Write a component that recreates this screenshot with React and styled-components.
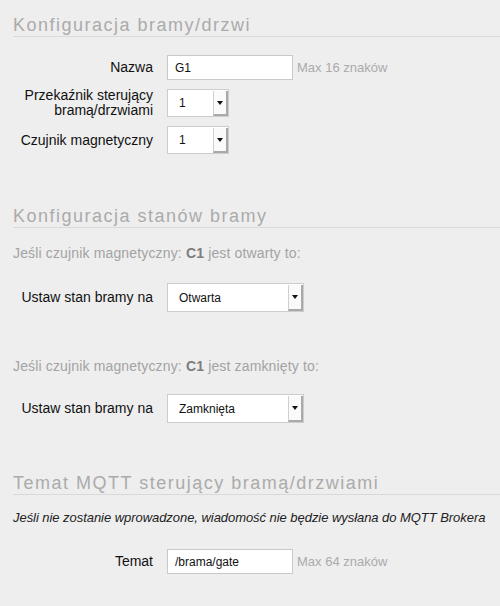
import React from 'react'
import styled, { createGlobalStyle } from 'styled-components'

const GlobalStyle = createGlobalStyle`
  html, body {
    margin: 0;
    padding: 0;
    background: #eeeeee;
  }
  body {
    font-family: "Liberation Sans", Arial, Helvetica, sans-serif;
    color: #111;
  }
`

const Page = styled.div`
  padding-left: 13px;
  padding-bottom: 20px;
  min-height: 606px;
  box-sizing: border-box;
  overflow: hidden;
`

const Heading = styled.h2`
  margin: ${p => p.$top}px 0 0;
  font-size: 18px;
  line-height: 22px;
  font-weight: normal;
  letter-spacing: 1.5px;
  color: #ababab;
  border-bottom: 1px solid #d9d9d9;
  white-space: nowrap;
`

const Note = styled.p`
  margin: ${p => p.$top}px 0 0;
  font-size: 14px;
  line-height: 16px;
  letter-spacing: 0.15px;
  color: #a3a3a3;
  b {
    color: #7d7d7d;
  }
`

const Info = styled.p`
  margin: ${p => p.$top}px 0 0;
  font-size: 13px;
  line-height: 16px;
  font-style: italic;
  letter-spacing: -0.05px;
  color: #222;
`

const Form = styled.div`
  margin-top: ${p => p.$top}px;
  display: flex;
  flex-direction: column;
  gap: 9px;
`

const Row = styled.div`
  display: grid;
  grid-template-columns: 140px auto;
  column-gap: 14px;
  align-items: center;
`

const Label = styled.label`
  font-size: 14px;
  line-height: 15px;
  margin: -1px 0;
  text-align: right;
  color: #111;
`

const Field = styled.div`
  display: flex;
  align-items: center;
  gap: 4px;
`

const TextInput = styled.input`
  box-sizing: border-box;
  width: 126px;
  height: 25px;
  margin: 0;
  padding: 0 7px;
  border: 1px solid #c9c9c9;
  background: #fff;
  font-family: "Liberation Sans", Arial, sans-serif;
  font-size: 12px;
  color: #111;
  outline: none;
`

const Hint = styled.span`
  font-size: 13px;
  color: #ababab;
`

const SelectBox = styled.div`
  box-sizing: border-box;
  display: flex;
  width: ${p => p.$width}px;
  height: ${p => p.$height}px;
  border: 1px solid #cdcdcd;
  background: #fff;
`

const NativeSelect = styled.select`
  flex: 1;
  min-width: 0;
  appearance: none;
  -webkit-appearance: none;
  border: 0;
  margin: 0;
  padding: 0 0 0 11px;
  background: transparent;
  font-family: "Liberation Sans", Arial, sans-serif;
  font-size: 12px;
  color: #111;
  outline: none;
`

const ArrowButton = styled.span`
  box-sizing: border-box;
  width: 15px;
  margin-top: 1px;
  display: flex;
  align-items: center;
  justify-content: center;
  background: #fafafa;
  border-left: 1px solid #d0d0d0;
  border-right: 2px solid #a9a9a9;
  border-bottom: 2px solid #a9a9a9;
  &::after {
    content: '';
    width: 0;
    height: 0;
    border-left: 3px solid transparent;
    border-right: 3px solid transparent;
    border-top: 4px solid #111;
  }
`

const Select = ({ width, height = 28, value, options }) => (
  <SelectBox $width={width} $height={height}>
    <NativeSelect defaultValue={value}>
      {options.map(o => (
        <option key={o}>{o}</option>
      ))}
    </NativeSelect>
    <ArrowButton />
  </SelectBox>
)

const stateOptions = ['Otwarta', 'Zamknięta']

export default function App() {
  return (
    <>
      <GlobalStyle />
      <Page>
        <Heading $top={14}>Konfiguracja bramy/drzwi</Heading>
        <Form $top={18}>
          <Row>
            <Label>Nazwa</Label>
            <Field>
              <TextInput defaultValue="G1" maxLength={16} />
              <Hint>Max 16 znaków</Hint>
            </Field>
          </Row>
          <Row>
            <Label>
              Przekaźnik sterujący
              <br />
              bramą/drzwiami
            </Label>
            <Field>
              <Select width={62} value="1" options={['1', '2', '3', '4']} />
            </Field>
          </Row>
          <Row>
            <Label>Czujnik magnetyczny</Label>
            <Field>
              <Select width={62} value="1" options={['1', '2', '3', '4']} />
            </Field>
          </Row>
        </Form>

        <Heading $top={51}>Konfiguracja stanów bramy</Heading>
        <Note $top={17}>
          Jeśli czujnik magnetyczny: <b>C1</b> jest otwarty to:
        </Note>
        <Form $top={22}>
          <Row>
            <Label>Ustaw stan bramy na</Label>
            <Field>
              <Select width={137} height={29} value="Otwarta" options={stateOptions} />
            </Field>
          </Row>
        </Form>
        <Note $top={46}>
          Jeśli czujnik magnetyczny: <b>C1</b> jest zamknięty to:
        </Note>
        <Form $top={20}>
          <Row>
            <Label>Ustaw stan bramy na</Label>
            <Field>
              <Select width={137} height={29} value="Zamknięta" options={stateOptions} />
            </Field>
          </Row>
        </Form>

        <Heading $top={49}>Temat MQTT sterujący bramą/drzwiami</Heading>
        <Info $top={15}>
          Jeśli nie zostanie wprowadzone, wiadomość nie będzie wysłana do MQTT Brokera
        </Info>
        <Form $top={23}>
          <Row>
            <Label>Temat</Label>
            <Field>
              <TextInput defaultValue="/brama/gate" maxLength={64} />
              <Hint>Max 64 znaków</Hint>
            </Field>
          </Row>
        </Form>
      </Page>
    </>
  )
}
